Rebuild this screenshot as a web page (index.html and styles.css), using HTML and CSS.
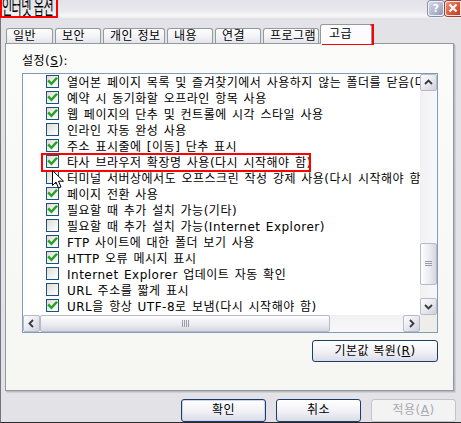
FILE: index.html
```html
<!DOCTYPE html>
<html>
<head>
<meta charset="utf-8">
<link rel="stylesheet" href="styles.css">
</head>
<body>
<div class="win">
  <div class="titlebar">
    <div class="title"><span class="title-text">인터넷 옵션</span></div>
    <div class="tb-btns">
      <div class="tb-help">?</div>
      <div class="tb-close"><svg width="16" height="15" viewBox="0 0 16 15"><path d="M4.5 3.5 L11.5 10.5 M11.5 3.5 L4.5 10.5" stroke="#fff" stroke-width="2.2" fill="none"/></svg></div>
    </div>
  </div>
  <div class="tabs">
    <div class="tab t-gen">일반</div>
    <div class="tab t-sec">보안</div>
    <div class="tab t-priv">개인 정보</div>
    <div class="tab t-cont">내용</div>
    <div class="tab t-conn">연결</div>
    <div class="tab t-prog">프로그램</div>
    <div class="tab tab-sel">고급</div>
  </div>
  <div class="panel">
    <div class="label">설정(<u>S</u>):</div>
    <div class="listbox">
      <div class="items">
        <div class="item"><span class="cb"><svg class="chk" viewBox="0 0 11 11"><polyline points="2,5.2 4.4,7.8 9.2,2.6"/></svg></span><span class="txt">열어본 페이지 목록 및 즐겨찾기에서 사용하지 않는 폴더를 닫음(다시 시작해야 함)</span></div>
        <div class="item"><span class="cb"><svg class="chk" viewBox="0 0 11 11"><polyline points="2,5.2 4.4,7.8 9.2,2.6"/></svg></span><span class="txt">예약 시 동기화할 오프라인 항목 사용</span></div>
        <div class="item"><span class="cb"><svg class="chk" viewBox="0 0 11 11"><polyline points="2,5.2 4.4,7.8 9.2,2.6"/></svg></span><span class="txt">웹 페이지의 단추 및 컨트롤에 시각 스타일 사용</span></div>
        <div class="item"><span class="cb"></span><span class="txt">인라인 자동 완성 사용</span></div>
        <div class="item"><span class="cb"><svg class="chk" viewBox="0 0 11 11"><polyline points="2,5.2 4.4,7.8 9.2,2.6"/></svg></span><span class="txt">주소 표시줄에 [이동] 단추 표시</span></div>
        <div class="item"><span class="cb"><svg class="chk" viewBox="0 0 11 11"><polyline points="2,5.2 4.4,7.8 9.2,2.6"/></svg></span><span class="txt">타사 브라우저 확장명 사용(다시 시작해야 함)</span></div>
        <div class="item"><span class="cb"></span><span class="txt">터미널 서버상에서도 오프스크린 작성 강제 사용(다시 시작해야 함)</span></div>
        <div class="item"><span class="cb"><svg class="chk" viewBox="0 0 11 11"><polyline points="2,5.2 4.4,7.8 9.2,2.6"/></svg></span><span class="txt">페이지 전환 사용</span></div>
        <div class="item"><span class="cb"><svg class="chk" viewBox="0 0 11 11"><polyline points="2,5.2 4.4,7.8 9.2,2.6"/></svg></span><span class="txt">필요할 때 추가 설치 가능(기타)</span></div>
        <div class="item"><span class="cb"></span><span class="txt">필요할 때 추가 설치 가능(Internet Explorer)</span></div>
        <div class="item"><span class="cb"><svg class="chk" viewBox="0 0 11 11"><polyline points="2,5.2 4.4,7.8 9.2,2.6"/></svg></span><span class="txt">FTP 사이트에 대한 폴더 보기 사용</span></div>
        <div class="item"><span class="cb"><svg class="chk" viewBox="0 0 11 11"><polyline points="2,5.2 4.4,7.8 9.2,2.6"/></svg></span><span class="txt">HTTP 오류 메시지 표시</span></div>
        <div class="item"><span class="cb"></span><span class="txt">Internet Explorer 업데이트 자동 확인</span></div>
        <div class="item"><span class="cb"></span><span class="txt">URL 주소를 짧게 표시</span></div>
        <div class="item"><span class="cb"><svg class="chk" viewBox="0 0 11 11"><polyline points="2,5.2 4.4,7.8 9.2,2.6"/></svg></span><span class="txt">URL을 항상 UTF-8로 보냄(다시 시작해야 함)</span></div>
      </div>
      <div class="vscroll">
        <div class="sbtn"><svg width="15" height="15" viewBox="0 0 15 15"><polyline points="4,9 7.5,5.5 11,9" class="arr"/></svg></div>
        <div class="vthumb"><svg width="15" height="8" viewBox="0 0 15 8"><path d="M4 1.5 H11 M4 3.5 H11 M4 5.5 H11" class="grip"/></svg></div>
        <div class="vtrack"></div>
        <div class="sbtn"><svg width="15" height="15" viewBox="0 0 15 15"><polyline points="4,6 7.5,9.5 11,6" class="arr"/></svg></div>
      </div>
      <div class="hscroll">
        <div class="sbtn"><svg width="15" height="15" viewBox="0 0 15 15"><polyline points="9,4 5.5,7.5 9,11" class="arr"/></svg></div>
        <div class="hthumb"><svg width="9" height="15" viewBox="0 0 9 15"><path d="M1.5 4 V11 M3.5 4 V11 M5.5 4 V11 M7.5 4 V11" class="grip"/></svg></div>
        <div class="htrack"></div>
        <div class="sbtn"><svg width="15" height="15" viewBox="0 0 15 15"><polyline points="6,4 9.5,7.5 6,11" class="arr"/></svg></div>
      </div>
      <div class="corner"></div>
    </div>
    <div class="restore-row"><div class="btn restore">기본값 복원(<u>R</u>)</div></div>
  </div>
  <div class="footer">
    <div class="btn btn-ok">확인</div>
    <div class="btn">취소</div>
    <div class="btn btn-dis">적용(<u>A</u>)</div>
  </div>
</div>
<div class="mark mark-title"></div>
<div class="mark mark-tab"></div>
<div class="mark mark-item"></div>
<svg class="cursor" width="13" height="20" viewBox="0 0 13 20"><path d="M0.5 0.5 L0.5 15.5 L4 12 L6.5 18 L9 17 L6.5 11.2 L11.5 11.2 Z" fill="#fff" stroke="#000" stroke-width="1"/></svg>
</body>
</html>
```

FILE: styles.css
```css
* { box-sizing: border-box; }
html, body { margin: 0; padding: 0; }
body {
  position: relative;
  width: 461px;
  height: 423px;
  overflow: hidden;
  background: #e3e2e7;
  font-family: "DejaVu Sans", "Noto Sans CJK KR", sans-serif;
  font-size: 12px;
  letter-spacing: 0.5px;
  color: #000;
}
.win {
  width: 461px;
  height: 423px;
  border-left: 1px solid #74747e;
  border-bottom: 1px solid #2a2a2a;
  background: #e3e2e7;
}
.titlebar {
  height: 20px;
  display: flex;
  justify-content: space-between;
  align-items: flex-start;
  background: linear-gradient(to bottom, #e2e2e8 0%, #e9e9ee 55%, #f8f8fa 80%, #dadae0 100%);
}
.title {
  width: 56px;
  height: 17px;
  overflow: hidden;
  padding-left: 1px;
}
.title-text {
  display: inline-block;
  font-family: "Noto Sans CJK KR", sans-serif;
  font-size: 11px;
  line-height: 11px;
  letter-spacing: -0.5px;
  word-spacing: 1px;
  margin-top: 5px;
  transform: scaleY(1.9);
  transform-origin: 0 100%;
  white-space: nowrap;
}
.tb-btns {
  display: flex;
  gap: 1px;
  padding-top: 1px;
}
.tb-help {
  width: 16px;
  height: 15px;
  border: 1px solid #f2f2f6;
  border-radius: 3px;
  background: linear-gradient(135deg, #d4d8e8 0%, #aeb4cc 60%, #9098b4 100%);
  box-shadow: 0 0 0 1px #8a8fa6;
  color: #fff;
  font-family: "DejaVu Sans", sans-serif;
  font-weight: bold;
  font-size: 11px;
  letter-spacing: 0;
  line-height: 13px;
  text-align: center;
}
.tb-close {
  width: 16px;
  height: 15px;
  border: 1px solid #f6e4de;
  border-radius: 3px 0 0 3px;
  background: linear-gradient(135deg, #f0907a 0%, #dc5a40 55%, #c23a22 100%);
  box-shadow: 0 0 0 1px #9a4030;
  overflow: hidden;
}
.tb-close svg { display: block; margin: -1px 0 0 -1px; }

.tabs {
  display: flex;
  align-items: flex-end;
  gap: 2px;
  height: 20px;
  margin-top: 4px;
  padding-left: 5px;
  position: relative;
  z-index: 1;
}
.tab {
  height: 15px;
  margin-bottom: 1px;
  padding-left: 6px;
  border: 1px solid #919b9c;
  border-bottom: none;
  border-radius: 3px 3px 0 0;
  background: linear-gradient(to bottom, #ffffff 0%, #f4f4f8 50%, #e4e4ec 100%);
  line-height: 14px;
  white-space: nowrap;
}
.t-gen { width: 47px; }
.t-sec { width: 46px; }
.t-priv { width: 62px; }
.t-cont { width: 46px; }
.t-conn { width: 46px; }
.t-prog { width: 56px; }
.tab-sel {
  width: 52px;
  height: 20px;
  margin-bottom: 0;
  margin-left: -1px;
  padding-left: 8px;
  padding-top: 2px;
  background: #fcfcfe;
}
.panel {
  width: 449px;
  height: 348px;
  margin: -1px 0 0 4px;
  padding: 9px 15px 0 16px;
  border: 1px solid #919b9c;
  background: linear-gradient(to bottom, #fbfbfa 0%, #f6f6f3 100%);
  box-shadow: 1px 1px 0 #b9b9c2, 2px 2px 0 #cfcfd6;
}
.label {
  height: 16px;
  line-height: 16px;
}
.listbox {
  margin-top: 4px;
  height: 260px;
  border: 1px solid #7f9db9;
  background: #fff;
  display: grid;
  grid-template-columns: 1fr 17px;
  grid-template-rows: 241px 17px;
}
.items {
  overflow: hidden;
  padding: 1px 0 0 23px;
}
.item {
  display: flex;
  align-items: flex-start;
  height: 16px;
  white-space: nowrap;
}
.cb {
  flex: none;
  width: 13px;
  height: 13px;
  margin-right: 8px;
  border: 1px solid #1c5180;
  background: linear-gradient(135deg, #dcdcd7 0%, #f2f2ef 60%, #ffffff 100%);
}
.chk {
  display: block;
  width: 11px;
  height: 11px;
}
.chk polyline {
  fill: none;
  stroke: #21a121;
  stroke-width: 2.4;
  stroke-linecap: square;
}
.txt {
  line-height: 16px;
  word-spacing: 1px;
}
.vscroll {
  display: flex;
  flex-direction: column;
  background: linear-gradient(to right, #f1f1f4 0%, #f8f8fa 100%);
}
.hscroll {
  display: flex;
  background: linear-gradient(to bottom, #f1f1f4 0%, #f8f8fa 100%);
}
.corner { background: #eeedeb; }
.sbtn {
  flex: none;
  width: 17px;
  height: 17px;
  padding: 0;
  border: 1px solid #b9b9c8;
  border-radius: 2px;
  background: linear-gradient(135deg, #ffffff 0%, #e6e6ee 55%, #cfcfdb 100%);
}
.sbtn svg { display: block; }
.arr {
  fill: none;
  stroke: #3a3a3a;
  stroke-width: 1.8;
}
.grip {
  stroke: #9a9aae;
  stroke-width: 1;
  fill: none;
}
.vthumb {
  flex: none;
  height: 42px;
  margin-top: 152px;
  border: 1px solid #b9b9c8;
  border-radius: 2px;
  background: linear-gradient(to right, #ffffff 0%, #e9e9f0 60%, #d6d6e0 100%);
  display: flex;
  align-items: center;
}
.vtrack { flex: 1; }
.hthumb {
  flex: none;
  width: 290px;
  border: 1px solid #b9b9c8;
  border-radius: 2px;
  background: linear-gradient(to bottom, #ffffff 0%, #e9e9f0 60%, #d6d6e0 100%);
  display: flex;
  justify-content: center;
}
.htrack { flex: 1; }

.restore-row {
  display: flex;
  justify-content: flex-end;
  margin-top: 7px;
}
.btn {
  width: 85px;
  height: 23px;
  border: 1px solid #1d3c6e;
  border-radius: 3px;
  background: linear-gradient(to bottom, #ffffff 0%, #f4f4f8 45%, #dcdce8 100%);
  text-align: center;
  line-height: 21px;
  white-space: nowrap;
}
.restore {
  width: 126px;
  height: 22px;
  line-height: 20px;
}
.footer {
  display: flex;
  justify-content: flex-end;
  gap: 10px;
  margin-top: 8px;
  padding-right: 5px;
}
.btn-ok {
  box-shadow: inset 0 0 0 1px #c8d6f4;
}
.btn-dis {
  border-color: #c4c3ca;
  background: #f3f3f3;
  color: #aaa9b0;
}
.mark {
  position: absolute;
  border: 2px solid #f00;
}
.mark-title { left: 0; top: -3px; width: 58px; height: 21px; }
.mark-tab { left: 322px; top: 24px; width: 52px; height: 21px; }
.mark-item { left: 41px; top: 153px; width: 270px; height: 19px; }
.cursor {
  position: absolute;
  left: 52px;
  top: 170px;
}
```
